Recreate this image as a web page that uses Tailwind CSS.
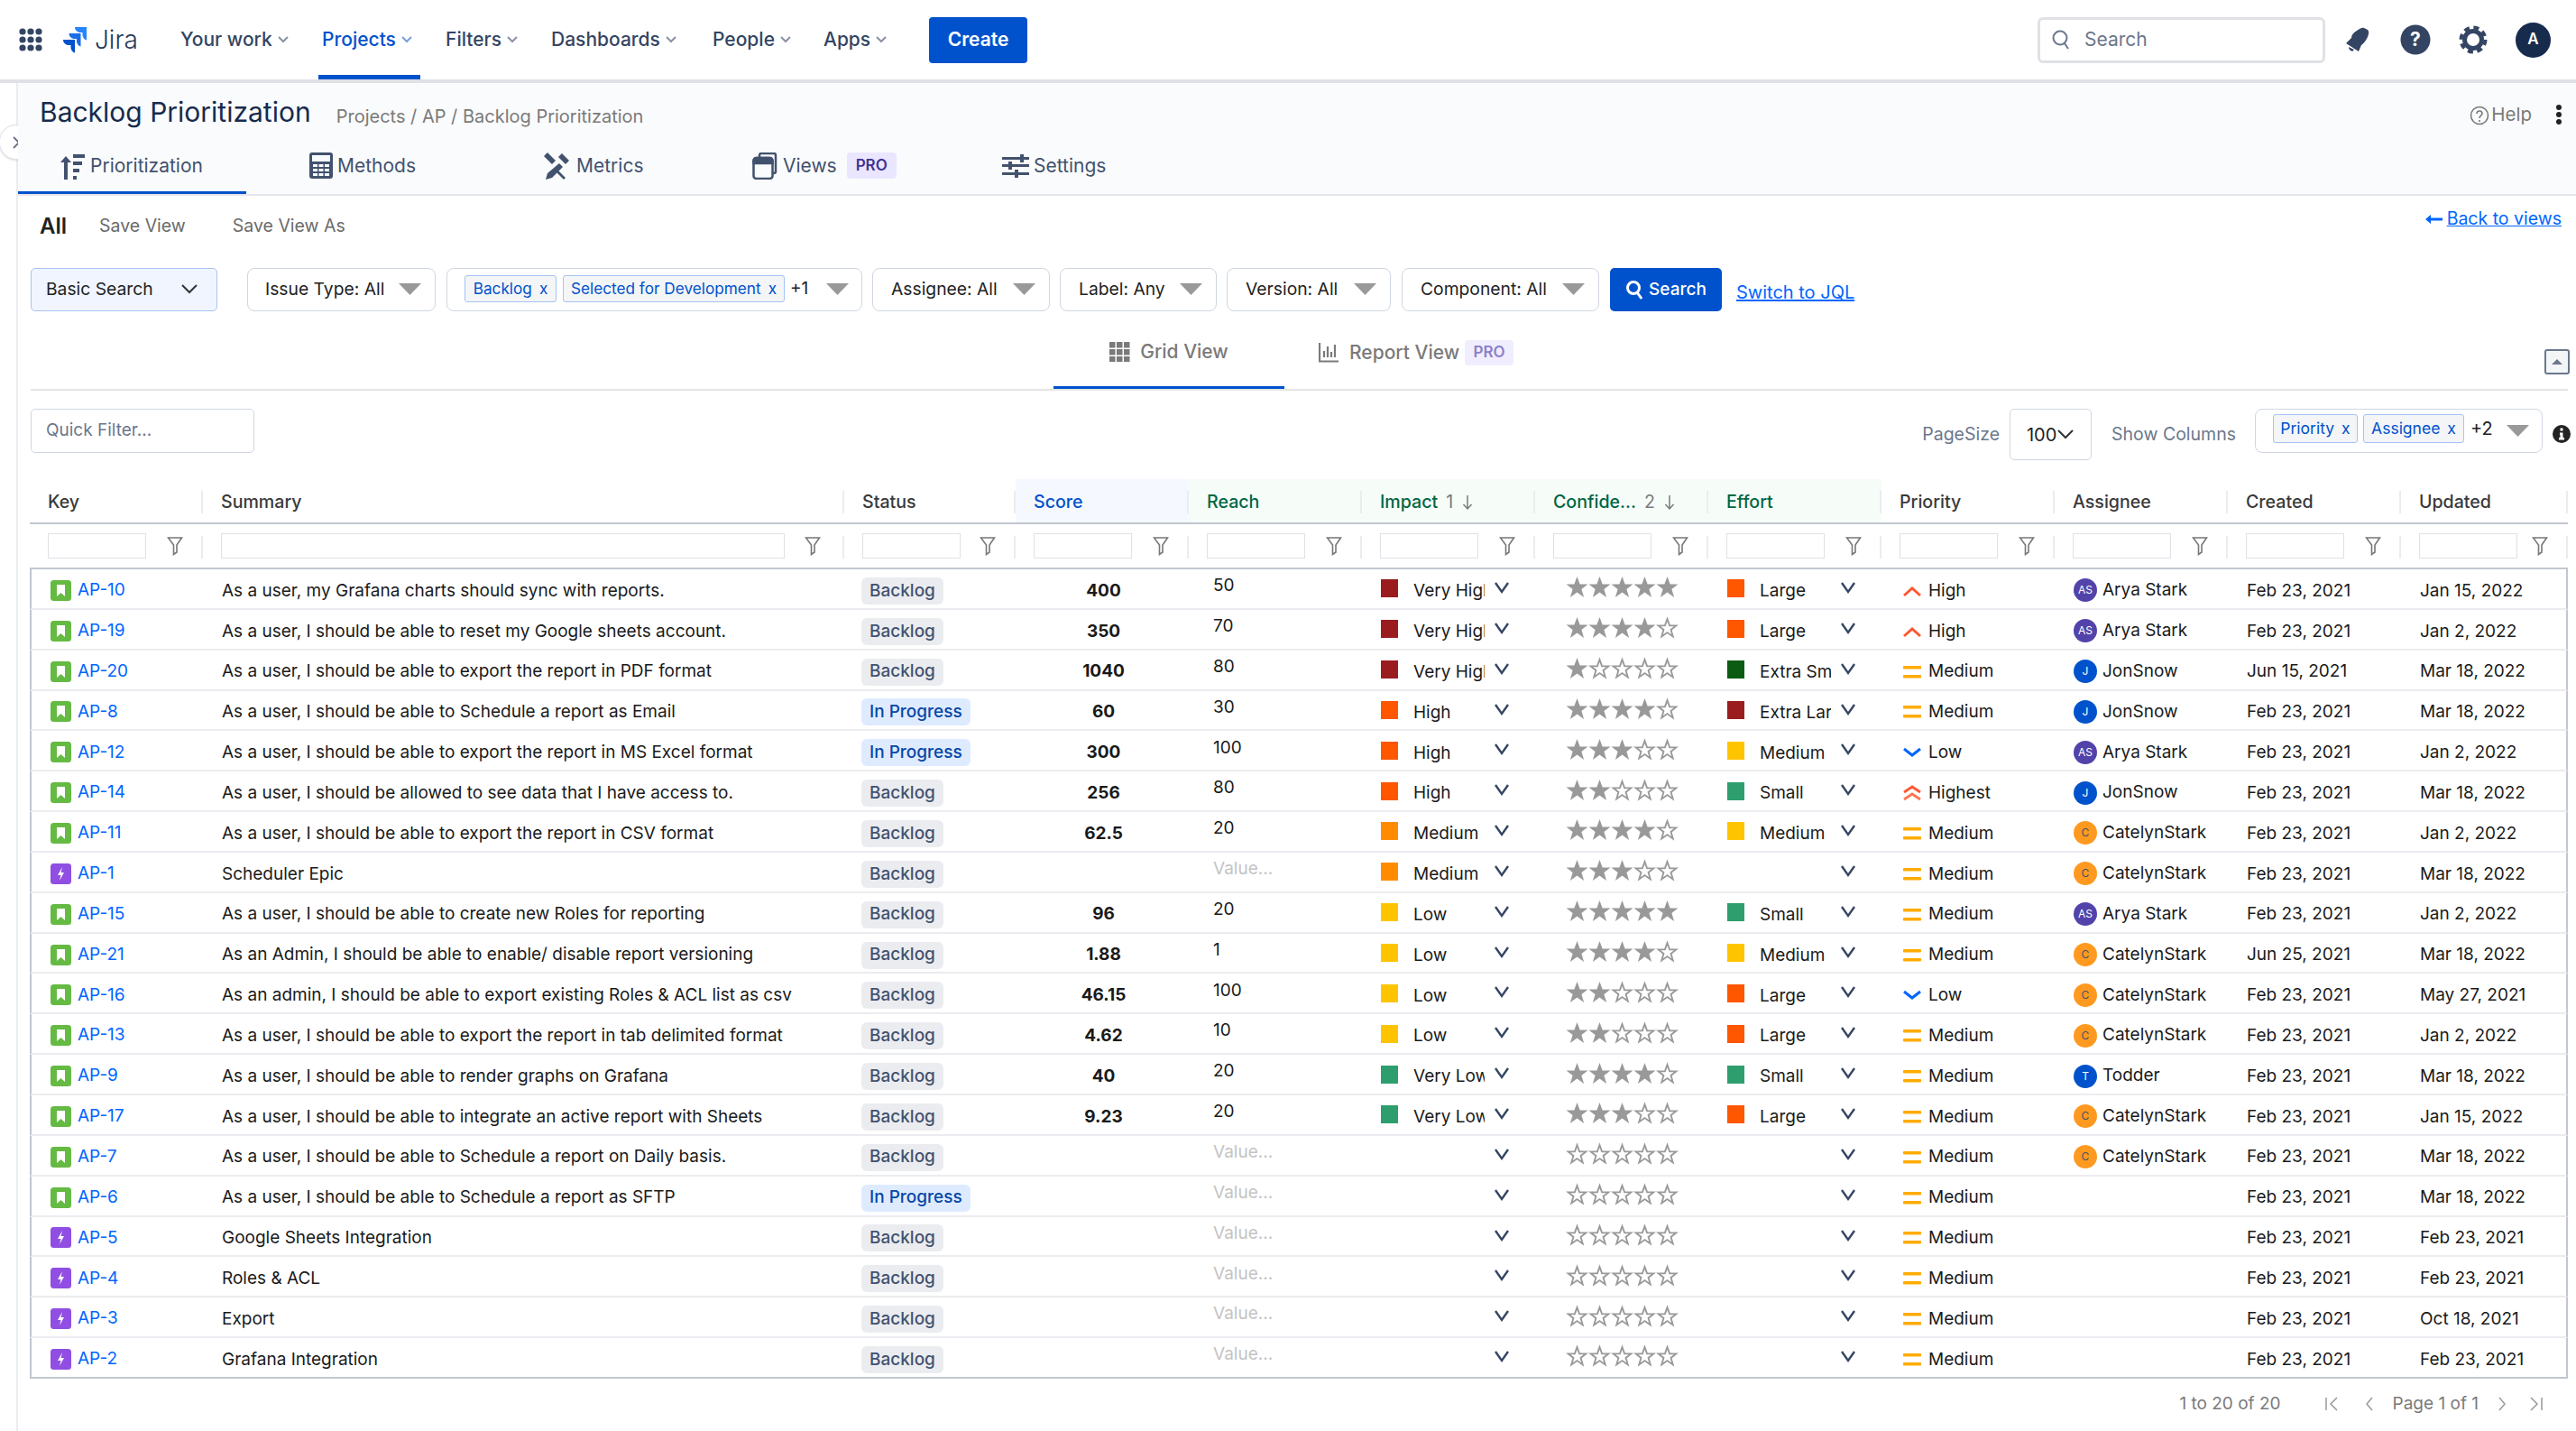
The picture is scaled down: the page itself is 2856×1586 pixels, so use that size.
<!doctype html>
<html><head><meta charset="utf-8"><title>Backlog Prioritization</title>
<script src="https://cdn.jsdelivr.net/npm/@tailwindcss/browser@4"></script></head>
<body class="m-0 bg-white">
<svg width="0" height="0" class="absolute">
<symbol id="star" viewBox="0 0 24 24"><path d="M12 1l3 8h8.500l-6.800 5.300 2.600 8.700L12 17.800 4.700 23l2.600-8.700L.5 9H9z" fill="#999"/></symbol>
<symbol id="star0" viewBox="0 0 24 24"><path d="M12 3l2.500 7h7l-5.600 4.300 2.100 7.200L12 17.300 6 21.500l2.100-7.200L2.500 10h7z" fill="#fff" stroke="#999" stroke-width="1.800"/></symbol>
<symbol id="chev" viewBox="0 0 18 18"><path d="M2 4l7 10 7-10" fill="none" stroke="#344563" stroke-width="2.400"/></symbol>
<symbol id="funnel" viewBox="0 0 18 22"><path d="M1.500 2h15L11 10v8l-3.500 2.500V10z" fill="none" stroke="#777" stroke-width="1.600"/></symbol>
<symbol id="tri" viewBox="0 0 25 13"><path d="M0 0h25L12.500 13z" fill="#999"/></symbol>
<symbol id="nc" viewBox="0 0 14 10"><path d="M2 2l5 5 5-5" fill="none" stroke-width="2"/></symbol>
</svg>
<div class="relative w-[2856px] h-[1586px] overflow-hidden text-[#172b4d] [font-family:Inter,sans-serif]">
<header class="h-[92px] flex items-start border-b-[4px] border-[#dfe1e6] bg-white">
  <div class="h-[88px] flex items-center pl-[21px] w-[200px]">
    <svg width="26" height="26" viewBox="0 0 26 26" fill="#344563"><circle cx="4" cy="4" r="3.600"/><circle cx="13" cy="4" r="3.600"/><circle cx="22" cy="4" r="3.600"/><circle cx="4" cy="13" r="3.600"/><circle cx="13" cy="13" r="3.600"/><circle cx="22" cy="13" r="3.600"/><circle cx="4" cy="22" r="3.600"/><circle cx="13" cy="22" r="3.600"/><circle cx="22" cy="22" r="3.600"/></svg>
    <svg width="30" height="30" viewBox="0 0 30 30" class="ml-[21px]"><path d="M28 1H15c0 3.500 3 6 6 6h2.500v2.400c0 3.200 2.500 5.600 4.500 6.100z" fill="#2684ff"/><path d="M21.500 8H8.500c0 3.500 3 6 6 6H17v2.400c0 3.200 2.500 5.600 4.500 6.100z" fill="#1a6fe8"/><path d="M15 15H2c0 3.500 3 6 6 6h2.500v2.400c0 3.200 2.500 5.600 4.500 6.100z" fill="#0052cc"/></svg>
    <span class="ml-[7px] text-[28px] font-light text-[#253858] leading-none">Jira</span>
  </div>
  <nav class="h-[88px] flex items-center text-[21px] font-medium text-[#344563]">
    <div class="w-[157px] flex items-center gap-[5px]">Your work<svg width="14" height="10" class="stroke-[#8993a4]"><use href="#nc"/></svg></div>
    <div class="relative w-[137px] h-full flex items-center gap-[5px] text-[#0052cc]">Projects<svg width="14" height="10" class="stroke-[#7a9fdd]"><use href="#nc"/></svg><span class="absolute left-[-4px] bottom-0 w-[113px] h-[5px] bg-[#0052cc]"></span></div>
    <div class="w-[117px] flex items-center gap-[5px]">Filters<svg width="14" height="10" class="stroke-[#8993a4]"><use href="#nc"/></svg></div>
    <div class="w-[179px] flex items-center gap-[5px]">Dashboards<svg width="14" height="10" class="stroke-[#8993a4]"><use href="#nc"/></svg></div>
    <div class="w-[123px] flex items-center gap-[5px]">People<svg width="14" height="10" class="stroke-[#8993a4]"><use href="#nc"/></svg></div>
    <div class="w-[117px] flex items-center gap-[5px]">Apps<svg width="14" height="10" class="stroke-[#8993a4]"><use href="#nc"/></svg></div>
    <button class="w-[109px] h-[51px] rounded-[4px] bg-[#0052cc] text-white font-semibold text-[21px]">Create</button>
  </nav>
  <div class="ml-auto h-[88px] flex items-center pr-[28px]">
    <div class="w-[319px] h-[51px] border-[3px] border-[#dfe1e6] rounded-[6px] bg-white flex items-center pl-[12px] gap-[15px] text-[21px] text-[#6b778c]">
      <svg width="22" height="24" viewBox="0 0 22 24" fill="none" stroke="#6b778c" stroke-width="2"><circle cx="10" cy="10" r="7.500"/><path d="M15 16l4 6"/></svg>Search</div>
    <svg width="28" height="28" viewBox="0 0 28 28" class="ml-[22px]" fill="#344563"><path d="M21 1c-2-1-5 1-8 3C9 6 7 9 7 12l-6 6 14 9 3-7c3-2 5-5 7-9 1-3 2-6 0-8z M4 22c0 2 1 4 4 5l2-2z"/></svg>
    <svg width="34" height="34" viewBox="0 0 34 34" class="ml-[33px]"><circle cx="17" cy="17" r="16.500" fill="#344563"/><text x="17" y="24" text-anchor="middle" fill="#fff" font-size="21" font-weight="700" font-family="Inter">?</text></svg>
    <svg width="32" height="32" viewBox="0 0 32 32" class="ml-[31px]" fill="none" stroke="#344563"><circle cx="16" cy="16" r="9.500" stroke-width="5"/><circle cx="16" cy="16" r="13.500" stroke-width="4" stroke-dasharray="6 4.600"/></svg>
    <div class="ml-[31px] w-[39px] h-[39px] rounded-full bg-[#172b4d] text-white text-[17px] font-semibold flex items-center justify-center">A</div>
  </div>
</header>
<div class="absolute left-[-1px] top-[138px] w-[38px] h-[39px] rounded-full bg-white border border-[#dfe1e6] shadow-sm flex items-center justify-center"><svg width="10" height="16" viewBox="0 0 10 16" fill="none" stroke="#6b778c" stroke-width="2"><path d="M2 2l6 6-6 6"/></svg></div>
<div class="flex h-[1494px]">
  <div class="w-[20px] shrink-0 border-r-[2px] border-[#ebecf0]"></div>
  <main class="flex-1 min-w-0">
    <section class="h-[125px] bg-[#fafbfc] border-b-[2px] border-[#e4e6ea] relative">
      <div class="h-[62px] flex items-center pt-[1px]">
        <h1 class="ml-[24px] text-[30px] leading-none font-normal text-[#172b4d]">Backlog Prioritization</h1>
        <span class="ml-[28px] mt-[11px] text-[20px] text-[#7a7a7a]">Projects / AP / Backlog Prioritization</span>
        <span class="ml-auto mt-[8px] flex items-center gap-[2px] text-[20.500px] text-[#7a7a7a]"><svg width="22" height="22" viewBox="0 0 22 22" fill="none" stroke="#7a7a7a" stroke-width="1.600"><circle cx="11" cy="11" r="9.500"/><path d="M8 9c0-4 6-4 6 0 0 2-3 2-3 5M11 16v2"/></svg>Help</span>
        <svg width="8" height="22" viewBox="0 0 8 22" fill="#222" class="ml-[26px] mr-[15px] mt-[6px]"><circle cx="4" cy="3" r="3"/><circle cx="4" cy="11" r="3"/><circle cx="4" cy="19" r="3"/></svg>
      </div>
      <div class="flex h-[61px] text-[21px] text-[#42526e]">
        <div class="relative w-[253px] flex items-center pl-[45px] gap-[6px] pb-[2px]"><svg width="29" height="30" viewBox="0 0 29 30" fill="#42526e"><path d="M8 4l6 7h-4v19H6V11H2z"/><path d="M16 2h13v4H16zM16 10h10v4H16zM16 18h7v4h-7zM16 26h4v4h-4z"/></svg>Prioritization<span class="absolute left-0 bottom-0 w-full h-[3px] bg-[#0052cc]"></span></div>
        <div class="w-[260px] flex items-center pl-[70px] gap-[5px] pb-[2px]"><svg width="26" height="29" viewBox="0 0 26 29" fill="#42526e"><path fill-rule="evenodd" d="M3 0h20a3 3 0 013 3v23a3 3 0 01-3 3H3a3 3 0 01-3-3V3a3 3 0 013-3zM3 3v7h20V3zM4 13v3h5v-3zM10.500 13v3h5v-3zM17 13v3h5v-3zM4 18v3h5v-3zM10.500 18v3h5v-3zM17 18v3h5v-3zM4 23v3h5v-3zM10.500 23v3h5v-3zM17 23v3h5v-3z"/></svg>Methods</div>
        <div class="w-[231px] flex items-center pl-[70px] gap-[6px] pb-[2px]"><svg width="30" height="30" viewBox="0 0 30 30" fill="#42526e"><path d="M4 0l9 9-4 4-9-9zM20 1l8 8-4 4-8-8zM17 12l4 4L9 28l-7 2 2-7zM14 18l10 10-2 2-10-10z"/></svg>Metrics</div>
        <div class="w-[277px] flex items-center pl-[70px] gap-[6px] pb-[2px]"><svg width="28" height="30" viewBox="0 0 28 30" fill="none" stroke="#42526e" stroke-width="2.500"><path d="M8 5V3a2 2 0 012-2h14a2 2 0 012 2v18a2 2 0 01-2 2h-1" /><rect x="1.500" y="6" width="21" height="23" rx="3"/><path d="M1.500 12V9a3 3 0 013-3h15a3 3 0 013 3v3z" fill="#42526e"/></svg>Views<span class="ml-[5px] w-[55px] h-[29px] rounded-[4px] bg-[#eae6ff] text-[#403294] text-[17px] font-semibold flex items-center justify-center">PRO</span></div>
        <div class="ml-[70px] flex items-center gap-[5px] pb-[2px]"><svg width="30" height="26" viewBox="0 0 30 26" fill="#42526e"><path d="M0 3h30v3H0zM0 11h30v3H0zM0 20h30v3H0zM20 0h4v9h-4zM7 8h4v9H7zM14 17h4v9h-4z"/></svg>Settings</div>
      </div>
    </section>
    <section class="pl-[14px] pr-[9px]">
      <div class="h-[68px] flex items-center">
        <strong class="ml-[10px] text-[24px] font-semibold text-[#222]">All</strong>
        <span class="ml-[36px] text-[19.500px] text-[#6b6b6b]">Save View</span>
        <span class="ml-[52px] text-[19.500px] text-[#6b6b6b]">Save View As</span>
        <a class="ml-auto mr-[7px] mb-[16px] text-[19.500px] text-[#0065ff] flex items-center"><svg width="19" height="12" viewBox="0 0 19 12" fill="#0065ff" class="mr-[1px]"><path d="M0 6l6-5v3.500h13v3H6V11z"/></svg><span class="underline pl-[4px]">Back to views</span></a>
      </div>
      <div class="mt-[12px] h-[48px] flex items-stretch text-[19.300px] text-[#222]">
        <div class="w-[207px] bg-[#f0f5ff] border-[1.500px] border-[#a8c4f5] rounded-[5px] flex items-center pl-[16px] pr-[20px] pb-[2px] justify-between">Basic Search<svg width="20" height="11" viewBox="0 0 20 11" fill="none" stroke="#333" stroke-width="2"><path d="M2 1l8 8 8-8"/></svg></div>
        <div class="ml-[33px] w-[209px] bg-white border-[1.500px] border-[#d0d6e0] rounded-[8px] flex items-center pl-[19px] pr-[15px] pb-[2px] justify-between">Issue Type: All<svg width="25" height="13"><use href="#tri"/></svg></div>
        <div class="ml-[12px] w-[461px] bg-white border-[1.500px] border-[#d0d6e0] rounded-[8px] flex items-center pl-[19px] pb-[2px] text-[19px]">
          <span class="h-[30px] w-[102px] mr-[7px] bg-[#f4f5f7] border border-[#a4c3f5] rounded-[3px] text-[#0052cc] text-[17.200px] flex items-center justify-center gap-[8px]">Backlog <b class="font-normal">x</b></span>
          <span class="h-[30px] w-[246px] bg-[#f4f5f7] border border-[#a4c3f5] rounded-[3px] text-[#0052cc] text-[17.200px] flex items-center justify-center gap-[8px]">Selected for Development <b class="font-normal">x</b></span>
          <span class="ml-[6px] w-[40px]">+1</span><svg width="25" height="13"><use href="#tri"/></svg></div>
        <div class="ml-[11px] w-[197px] bg-white border-[1.500px] border-[#d0d6e0] rounded-[8px] flex items-center pl-[20px] pr-[15px] pb-[2px] justify-between">Assignee: All<svg width="25" height="13"><use href="#tri"/></svg></div>
        <div class="ml-[11px] w-[174px] bg-white border-[1.500px] border-[#d0d6e0] rounded-[8px] flex items-center pl-[20px] pr-[15px] pb-[2px] justify-between">Label: Any<svg width="25" height="13"><use href="#tri"/></svg></div>
        <div class="ml-[11px] w-[182px] bg-white border-[1.500px] border-[#d0d6e0] rounded-[8px] flex items-center pl-[20px] pr-[15px] pb-[2px] justify-between">Version: All<svg width="25" height="13"><use href="#tri"/></svg></div>
        <div class="ml-[12px] w-[219px] bg-white border-[1.500px] border-[#d0d6e0] rounded-[8px] flex items-center pl-[20px] pr-[15px] pb-[2px] justify-between">Component: All<svg width="25" height="13"><use href="#tri"/></svg></div>
        <button class="ml-[12px] w-[124px] bg-[#0052cc] rounded-[5px] text-white font-medium text-[19px] flex items-center justify-center gap-[6px]"><svg width="20" height="22" viewBox="0 0 20 22" fill="none" stroke="#fff" stroke-width="3"><circle cx="9" cy="9" r="6.500"/><path d="M13 14l5 7"/></svg>Search</button>
        <a class="ml-[16px] self-end text-[20px] text-[#0065ff] underline leading-[30px] mb-[6px]">Switch to JQL</a>
      </div>
      <div class="h-[88px] border-b-[2px] border-[#e4e4e4] flex text-[21px] font-medium text-[#7a7a7a] relative">
        <div class="ml-[1134px] w-[256px] h-[86px] flex items-center justify-center gap-[11px] border-b-[3px] border-[#0052cc] pt-[6px]"><svg width="23" height="22" viewBox="0 0 23 22" fill="#7a7a7a"><path d="M0 0h6.500v6.500H0zM8 0h6.500v6.500H8zM16 0h6.500v6.500H16zM0 8h6.500v6.500H0zM8 8h6.500v6.500H8zM16 8h6.500v6.500H16zM0 16h6.500v6H0zM8 16h6.500v6H8zM16 16h6.500v6H16z"/></svg>Grid View</div>
        <div class="ml-[38px] h-[86px] flex items-center gap-[12px] pt-[6px]"><svg width="22" height="22" viewBox="0 0 22 22" fill="none" stroke="#7a7a7a" stroke-width="2.200"><path d="M1 0v20.500h21M6 16V9M10 16V4M14 16v-6M18 16V2"/></svg>Report View<span class="ml-[-6px] w-[54px] h-[28px] rounded-[4px] bg-[#f0edff] text-[#8b80c9] text-[17px] font-semibold flex items-center justify-center">PRO</span></div>
        <svg width="28" height="28" viewBox="0 0 28 28" class="absolute right-[-2px] top-[42px]" fill="none" stroke="#6b778c" stroke-width="2"><rect x="1" y="1" width="26" height="26" rx="2" fill="#f4f5f7"/><path d="M8 17l6-6 6 6z" fill="#6b778c" stroke="none"/></svg>
      </div>
      <div class="h-[98px] flex items-start pt-[20px]">
        <div class="w-[248px] h-[49px] border-[1.500px] border-[#d0d6e0] rounded-[5px] flex items-center pl-[16px] text-[19px] text-[#6b778c]">Quick Filter...</div>
        <span class="ml-auto mt-[14px] text-[19.500px] text-[#6b778c]">PageSize</span>
        <div class="ml-[11px] w-[91px] h-[57px] border-[1.500px] border-[#d0d6e0] rounded-[5px] flex items-center justify-center text-[20px] text-[#222]">100<svg width="20" height="11" viewBox="0 0 20 11" fill="none" stroke="#333" stroke-width="2"><path d="M2 1l8 8 8-8"/></svg></div>
        <span class="ml-[22px] mt-[14px] text-[19.500px] text-[#6b778c]">Show Columns</span>
        <div class="ml-[21px] w-[319px] h-[49px] border-[1.500px] border-[#d0d6e0] rounded-[8px] flex items-center pl-[19px] text-[20px] text-[#222]">
          <span class="w-[94px] h-[32px] mr-[6px] -mt-[5px] bg-[#f4f5f7] border border-[#a4c3f5] rounded-[3px] text-[#0052cc] text-[17.500px] flex items-center justify-center gap-[8px]">Priority <b class="font-normal">x</b></span>
          <span class="w-[112px] h-[32px] -mt-[5px] bg-[#f4f5f7] border border-[#a4c3f5] rounded-[3px] text-[#0052cc] text-[17.500px] flex items-center justify-center gap-[8px]">Assignee <b class="font-normal">x</b></span>
          <span class="ml-[7px] w-[40px] -mt-[5px]">+2</span><svg width="25" height="13"><use href="#tri"/></svg></div>
        <svg width="20" height="20" viewBox="0 0 20 20" class="ml-[11px] mr-[-3px] mt-[18px]"><circle cx="10" cy="10" r="10" fill="#222"/><path d="M8.500 3.500h3v3h-3zM8 8.500h3.500V14H13v2.500H7V14h1.500v-3H8z" fill="#fff"/></svg>
      </div>
      <div id="table" class="w-[2814px] -ml-[1px] text-[19px]"></div>
      <div class="h-[56px] flex items-center justify-end text-[19px] text-[#7a7a7a] w-[2814px]">
        <span>1 to 20 of 20</span>
        <svg width="16" height="16" viewBox="0 0 16 16" class="ml-[48px]" fill="none" stroke="#999" stroke-width="1.500"><path d="M2 1v14M14 1L7 8l7 7"/></svg>
        <svg width="12" height="16" viewBox="0 0 12 16" class="ml-[28px]" fill="none" stroke="#999" stroke-width="1.500"><path d="M9 1L3 8l6 7"/></svg>
        <span class="ml-[20px]">Page 1 of 1</span>
        <svg width="12" height="16" viewBox="0 0 12 16" class="ml-[20px]" fill="none" stroke="#999" stroke-width="1.500"><path d="M3 1l6 7-6 7"/></svg>
        <svg width="16" height="16" viewBox="0 0 16 16" class="ml-[24px] mr-[28px]" fill="none" stroke="#999" stroke-width="1.500"><path d="M2 1l7 7-7 7M14 1v14"/></svg>
      </div>
    </section>
  </main>
</div>
</div>
<script>
const G="grid grid-cols-[192px_711px_190px_192px_192px_192px_192px_192px_192px_192px_192px_185px]";
const G2="grid grid-cols-[190px_711px_190px_192px_192px_192px_192px_192px_192px_192px_192px_183px]";
const heads=[["Key",""],["Summary",""],["Status",""],["Score","s"],["Reach","g"],["Impact","g",1],["Confide...","g",2],["Effort","g"],["Priority",""],["Assignee",""],["Created",""],["Updated",""]];
const SEP='<span class="absolute right-0 top-[13px] h-[25px] w-[2px] bg-[#ebecf0]"></span>';
let h='<div class="'+G+' h-[50px] border-b-[2px] border-[#c1c7d0] text-[19.600px] font-medium">';
for(const [t,k,n] of heads){
  const bg=k=="s"?"bg-[#f5f9ff] text-[#0052cc]":k=="g"?"bg-[#f6fdf9] text-[#006644]":"text-[#3a3a3a]";
  h+='<div class="relative flex items-center pl-[20px] pt-[3px] '+bg+'">'+t+(n?'<span class="ml-[9px] font-normal text-[#7a7a7a]">'+n+'</span><svg width="12" height="18" viewBox="0 0 12 18" class="ml-[10px]" fill="none" stroke="#7a7a7a" stroke-width="1.500"><path d="M6 1v15M1.500 11L6 16l4.500-5"/></svg>':'')+SEP+'</div>';
}
h+='</div><div class="'+G+' h-[50px] border-b-[2px] border-[#c1c7d0]">';
heads.forEach((c,i)=>{const w=i==1?"w-[625px]":"w-[109px]";const fr=i==1?"right-[26px]":"right-[22px]";
  h+='<div class="relative flex items-center pl-[20px] pb-[1px]"><span class="h-[28px] '+w+' border-[1.500px] border-[#dfe1e6]"></span><svg width="18" height="22" class="absolute '+fr+' top-[13px]"><use href="#funnel"/></svg><span class="absolute right-0 top-[13px] h-[25px] w-[2px] bg-[#ebecf0]"></span></div>';});
h+='</div>';
const US="As a user, I should be able to ";
const VH=["Very High","bg-[#9b1c1f]"],HI=["High","bg-[#ff5600]"],ME=["Medium","bg-[#ff8b00]"],LO=["Low","bg-[#ffc400]"],VL=["Very Low","bg-[#2e9e6e]"];
const XS=["Extra Small","bg-[#0b5c12]"],SM=["Small","bg-[#2e9e6e]"],MD=["Medium","bg-[#ffc400]"],LG=["Large","bg-[#ff5600]"],XL=["Extra Large","bg-[#9b1c1f]"];
const AR=["AS","Arya Stark","bg-[#5243aa] text-white"],JO=["J","JonSnow","bg-[#0052cc] text-white"],CA=["C","CatelynStark","bg-[#ff991f] text-[#42526e]"],TO=["T","Todder","bg-[#0052cc] text-white"];
const F="Feb 23, 2021",M="Mar 18, 2022",J="Jan 2, 2022";
const rows=[
["AP-10",0,"As a user, my Grafana charts should sync with reports.",0,"400","50",VH,5,LG,"H",AR,F,"Jan 15, 2022"],
["AP-19",0,US+"reset my Google sheets account.",0,"350","70",VH,4,LG,"H",AR,F,J],
["AP-20",0,US+"export the report in PDF format",0,"1040","80",VH,1,XS,"M",JO,"Jun 15, 2021",M],
["AP-8",0,US+"Schedule a report as Email",1,"60","30",HI,4,XL,"M",JO,F,M],
["AP-12",0,US+"export the report in MS Excel format",1,"300","100",HI,3,MD,"L",AR,F,J],
["AP-14",0,"As a user, I should be allowed to see data that I have access to.",0,"256","80",HI,2,SM,"T",JO,F,M],
["AP-11",0,US+"export the report in CSV format",0,"62.5","20",ME,4,MD,"M",CA,F,J],
["AP-1",1,"Scheduler Epic",0,"","",ME,3,null,"M",CA,F,M],
["AP-15",0,US+"create new Roles for reporting",0,"96","20",LO,5,SM,"M",AR,F,J],
["AP-21",0,"As an Admin, I should be able to enable/ disable report versioning",0,"1.88","1",LO,4,MD,"M",CA,"Jun 25, 2021",M],
["AP-16",0,"As an admin, I should be able to export existing Roles &amp; ACL list as csv",0,"46.15","100",LO,2,LG,"L",CA,F,"May 27, 2021"],
["AP-13",0,US+"export the report in tab delimited format",0,"4.62","10",LO,2,LG,"M",CA,F,J],
["AP-9",0,US+"render graphs on Grafana",0,"40","20",VL,4,SM,"M",TO,F,M],
["AP-17",0,US+"integrate an active report with Sheets",0,"9.23","20",VL,3,LG,"M",CA,F,"Jan 15, 2022"],
["AP-7",0,US+"Schedule a report on Daily basis.",0,"","",null,0,null,"M",CA,F,M],
["AP-6",0,US+"Schedule a report as SFTP",1,"","",null,0,null,"M",null,F,M],
["AP-5",1,"Google Sheets Integration",0,"","",null,0,null,"M",null,F,F],
["AP-4",1,"Roles &amp; ACL",0,"","",null,0,null,"M",null,F,F],
["AP-3",1,"Export",0,"","",null,0,null,"M",null,F,"Oct 18, 2021"],
["AP-2",1,"Grafana Integration",0,"","",null,0,null,"M",null,F,F]];
const STORY='<svg width="23" height="23" viewBox="0 0 23 23"><rect width="23" height="23" rx="3.500" fill="#65ba43"/><path d="M7 5h9v13l-4.500-4L7 18z" fill="#fff"/></svg>';
const EPIC='<svg width="23" height="23" viewBox="0 0 23 23"><rect width="23" height="23" rx="3.500" fill="#904ee2"/><path d="M13 4l-5 9h3.500l-1.500 6 5-9h-3.500z" fill="#fff"/></svg>';
const PRI={H:'<svg width="20" height="14" viewBox="0 0 20 14" fill="none" stroke="#ff5630" stroke-width="3"><path d="M1 12l9-8 9 8"/></svg>',
T:'<svg width="20" height="18" viewBox="0 0 20 18" fill="none" stroke="#ff5630" stroke-width="2.800"><path d="M1 8l9-6 9 6"/><path stroke="#ff7452" d="M1 16l9-6 9 6"/></svg>',
M:'<svg width="20" height="16" viewBox="0 0 20 16" fill="#ffab00"><rect y="1" width="20" height="3.500" rx="1"/><rect y="11" width="20" height="3.500" rx="1"/></svg>',
L:'<svg width="20" height="12" viewBox="0 0 20 12" fill="none" stroke="#0065ff" stroke-width="3"><path d="M1 2l9 7 9-7"/></svg>'};
const CH='<svg width="18" height="18" class="absolute top-[11px] right-[28px]"><use href="#chev"/></svg>';
function sel(v,w){return '<div class="relative flex items-center pl-[21px]">'+(v?'<span class="w-[19px] h-[20px] '+v[1]+'"></span><span class="ml-[17px] '+w+' overflow-hidden whitespace-nowrap pt-[6px]">'+v[0]+'</span>':'')+CH+'</div>';}
rows.forEach((r,i)=>{
  const b=i==19?"border-b-[2px] border-b-[#c1c7d0]":"border-b-[2px] border-b-[#ebecf0]";
  h+='<div class="'+G2+' h-[44.85px] '+b+' border-x-[2px] border-x-[#c1c7d0] text-[#1a1a1a]">';
  h+='<div class="flex items-center pl-[21px] pt-[4px] gap-[7px] text-[#0065ff]">'+(r[1]?EPIC:STORY)+r[0]+'</div>';
  h+='<div class="flex items-center pl-[21px] whitespace-nowrap pt-[5px]">'+r[2]+'</div>';
  h+='<div class="flex items-center pl-[19px] pt-[5px]">'+(r[3]?'<span class="h-[30px] px-[9px] rounded-[6px] bg-[#deebff] text-[#0747a6] font-medium flex items-center">In Progress</span>':'<span class="h-[30px] px-[9px] rounded-[6px] bg-[#ebecf0] text-[#42526e] font-medium flex items-center">Backlog</span>')+'</div>';
  h+='<div class="flex items-center justify-center font-bold pt-[5px] pl-[3px]">'+r[4]+'</div>';
  h+='<div class="flex items-center pl-[27px] pb-[6px] '+(r[5]?'':'text-[#c4c4c4]')+'">'+(r[5]||'Value...')+'</div>';
  h+=sel(r[6],'w-[79px]');
  let s='';for(let k=0;k<5;k++)s+='<svg width="25" height="25"><use href="'+(k<r[7]?'#star':'#star0')+'"/></svg>';
  h+='<div class="flex items-center pl-[34px] pb-[3px]">'+s+'</div>';
  h+=sel(r[8],'w-[79px]');
  h+='<div class="flex items-center pl-[24px] pt-[5px]"><span class="w-[20px] flex justify-center">'+PRI[r[9]]+'</span><span class="ml-[8px]">'+(({H:"High",T:"Highest",M:"Medium",L:"Low"})[r[9]])+'</span></div>';
  h+='<div class="flex items-center pl-[21px] pt-[4px]">'+(r[10]?'<span class="w-[26px] h-[26px] rounded-full text-[12px] flex items-center justify-center '+r[10][2]+'">'+r[10][0]+'</span><span class="ml-[6px]">'+r[10][1]+'</span>':'')+'</div>';
  h+='<div class="flex items-center pl-[21px] pt-[5px]">'+r[11]+'</div>';
  h+='<div class="flex items-center pl-[21px] pt-[5px]">'+r[12]+'</div></div>';
});
document.getElementById('table').innerHTML=h;
</script>
</body></html>
